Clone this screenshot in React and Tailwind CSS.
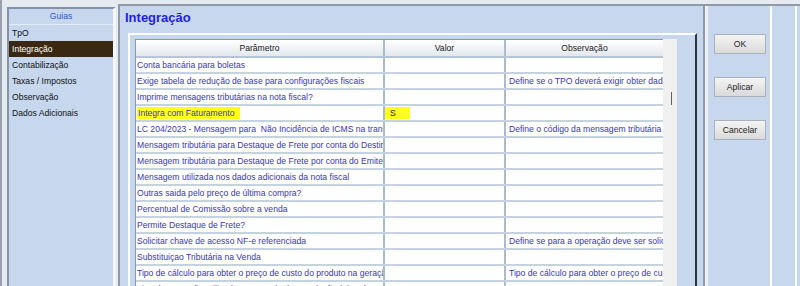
import React from 'react';

const guias = ['TpO', 'Integração', 'Contabilização', 'Taxas / Impostos', 'Observação', 'Dados Adicionais'];

const rows = [
  { p: 'Conta bancária para boletas' },
  { p: 'Exige tabela de redução de base para configurações fiscais', o: 'Define se o TPO deverá exigir obter dados da tabela de redução' },
  { p: 'Imprime mensagens tributárias na nota fiscal?' },
  { p: 'Integra com Faturamento', v: 'S', mark: true },
  { p: 'LC 204/2023 - Mensagem para  Não Incidência de ICMS na transferência', o: 'Define o código da mensagem tributária a ser utilizada' },
  { p: 'Mensagem tributária para Destaque de Frete por conta do Destinatário' },
  { p: 'Mensagem tributária para Destaque de Frete por conta do Emitente' },
  { p: 'Mensagem utilizada nos dados adicionais da nota fiscal' },
  { p: 'Outras saida pelo preço de última compra?' },
  { p: 'Percentual de Comissão sobre a venda' },
  { p: 'Permite Destaque de Frete?' },
  { p: 'Solicitar chave de acesso NF-e referenciada', o: 'Define se para a operação deve ser solicitada a chave' },
  { p: 'Substituiçao Tributária na Venda' },
  { p: 'Tipo de cálculo para obter o preço de custo do produto na geração', o: 'Tipo de cálculo para obter o preço de custo do produto' },
  { p: 'Tipo de operação utilizada na Entrada de Devolução (Tipo de operação)' },
];

const Button = ({ children }) => (
  <button className="h-[20px] w-[52px] border border-[#a9b1ba] bg-gradient-to-b from-[#f4f4f4] to-[#dadada] text-[8.6px] text-[#222]">
    {children}
  </button>
);

const App = () => {
  return (
    <div
      className="flex h-[286px] w-[800px] overflow-hidden bg-[#e6ebf2] text-[8.6px]"
      style={{ fontFamily: '"Liberation Sans", Arial, sans-serif' }}
    >
      {/* Guias */}
      <div className="h-full w-[118px] shrink-0 border-l-2 border-[#98a2ae] pl-[5px] pr-[2px] pt-[7px]">
        <div className="h-[300px] border-l-2 border-t-2 border-[#8494a6] border-r-[3px] border-r-[#f4f7fb] bg-[#c6d7ee]">
          <div className="flex h-[16px] items-center justify-center border-b border-[#e6edf6] text-[#2f55d4]">Guias</div>
          {guias.map((g) => (
            <div
              key={g}
              className={
                g === 'Integração'
                  ? 'flex h-[16px] items-center bg-[#3b2812] pl-[3px] text-white'
                  : 'flex h-[16px] items-center pl-[3px] text-[#111]'
              }
            >
              {g}
            </div>
          ))}
        </div>
      </div>

      {/* Main */}
      <div className="h-full w-[587px] shrink-0 pt-[4px]">
        <div className="h-[300px] border-l-2 border-t-2 border-r-2 border-[#8e9aa8] bg-[#c6d7ee]">
          <div className="pl-[5px] pt-[4px] text-[13px] font-bold leading-[16px] text-[#1e1ee6]">Integração</div>
          <div className="ml-[8px] mt-[7px] h-[260px] w-[569px] border-l-2 border-t-2 border-r-2 border-white border-r-[#2c3440] pl-[5px] pt-[4px]">
            <div className="flex">
              <div className="w-[528px] border-l border-t border-[#8899aa] bg-white">
                <div className="flex h-[18px] border-b-2 border-[#b4c6d8] bg-gradient-to-b from-white to-[#e3e8ee] text-[#1a1a1a]">
                  <div className="flex w-[249px] items-center justify-center border-r-2 border-[#a8bccc]">Parâmetro</div>
                  <div className="flex w-[121px] items-center justify-center border-r-2 border-[#a8bccc]">Valor</div>
                  <div className="flex flex-1 items-center justify-center">Observação</div>
                </div>
                {rows.map((r, i) => (
                  <div key={i} className="flex h-[16px] border-b-2 border-[#c4d3e2] text-[#3636c4]">
                    <div className="flex w-[249px] items-center overflow-hidden whitespace-pre border-r-2 border-[#a8bccc] pl-[1px]">
                      {r.mark ? <span className="bg-[#ffff1a] pl-[1px] pr-[5px]">{r.p}</span> : r.p}
                    </div>
                    <div className="flex w-[121px] items-center overflow-hidden whitespace-nowrap border-r-2 border-[#a8bccc]">
                      {r.v && <span className="bg-[#ffff1a] pl-[5px] pr-[14px] text-[#222]">{r.v}</span>}
                    </div>
                    <div className="flex flex-1 items-center overflow-hidden whitespace-nowrap pl-[3px]">{r.o}</div>
                  </div>
                ))}
              </div>
              <div className="h-[260px] w-[14px] bg-[#f0f0f0] pl-[8px] pt-[53px]">
                <div className="h-[13px] w-[1px] bg-[#606060]" />
              </div>
            </div>
          </div>
        </div>
      </div>

      {/* Actions */}
      <div className="flex h-full flex-1 pt-[4px]">
        <div className="flex h-[300px] w-full border-t-2 border-[#8e9aa8] bg-[#c6d7ee]">
          <div className="flex w-[67px] flex-col gap-[23px] border-l-[3px] border-r-2 border-l-[#eef2f7] border-r-white pl-[6px] pt-[28px]">
            <Button>OK</Button>
            <Button>Aplicar</Button>
            <Button>Cancelar</Button>
          </div>
          <div className="w-[25px] border-r-2 border-white" />
        </div>
      </div>
    </div>
  );
};

export default App;
